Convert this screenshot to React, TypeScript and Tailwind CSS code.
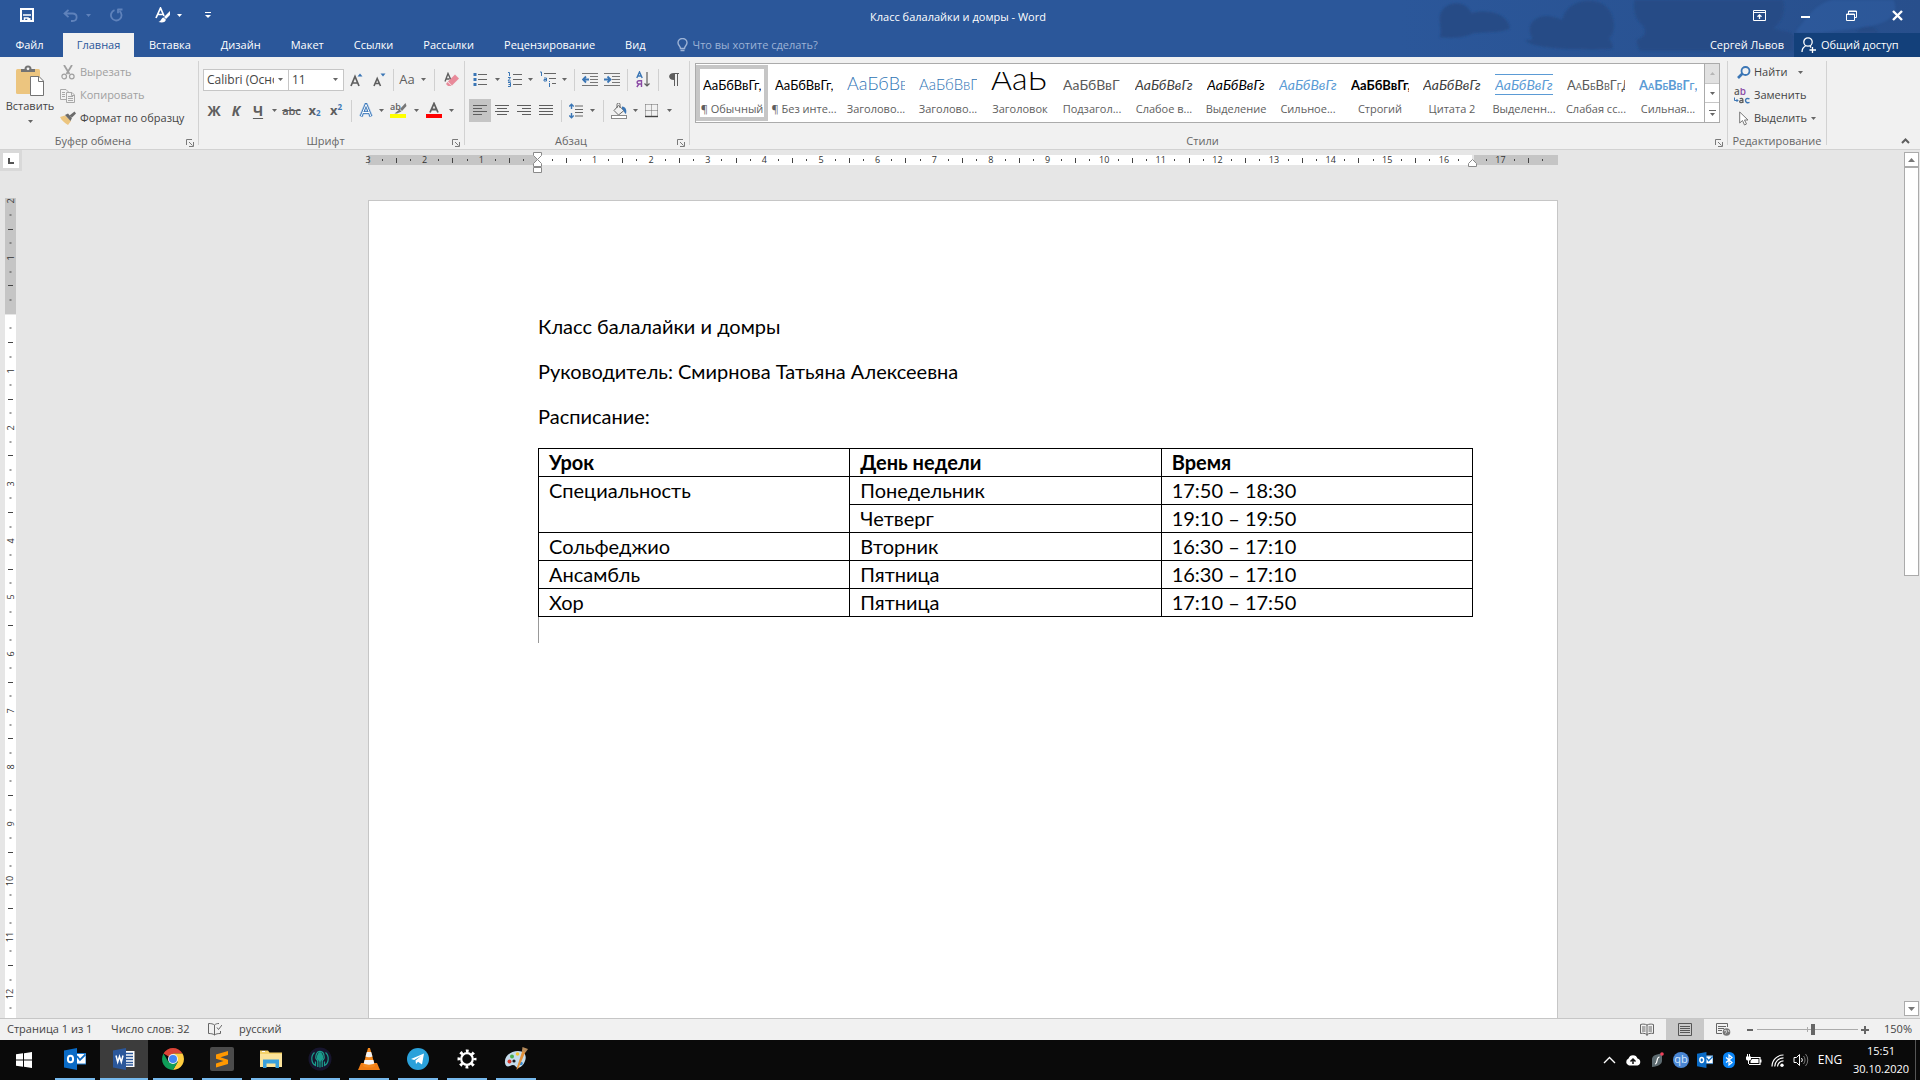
import React from "react";

type Kids = { children?: React.ReactNode };

/* ---------- shared pieces ---------- */

function Svg({ w, h, label, children }: Kids & { w: number; h: number; label?: string }) {
  return (
    <svg width={w} height={h} viewBox={`0 0 ${w} ${h}`} className="block shrink-0" aria-hidden={!label} aria-label={label} fill="none">
      {children}
    </svg>
  );
}

function Caret({ className = "text-[#666666]" }: { className?: string }) {
  return (
    <svg width="5" height="3" viewBox="0 0 5 3" className={`block shrink-0 ${className}`} aria-hidden="true">
      <path d="M0 0H5L2.5 3Z" fill="currentColor" />
    </svg>
  );
}

function Tool({ label, className, children }: Kids & { label: string; className: string }) {
  return (
    <button type="button" aria-label={label} className={`flex h-[23px] shrink-0 items-center justify-center text-[#5e5e5e] ${className}`}>
      {children}
    </button>
  );
}

function Divider({ className }: { className: string }) {
  return (
    <div className={`flex h-[22px] shrink-0 justify-center ${className}`}>
      <div className="w-px bg-[#d0d0d0]" />
    </div>
  );
}

function Launcher({ label }: { label: string }) {
  return (
    <button type="button" aria-label={label} className="mr-1 mt-1 shrink-0">
      <Svg w={8} h={8}>
        <path d="M.5 6V.5H6M3 3L6.5 6.5M7.5 3V7.5H3" stroke="#7a7a7a" />
      </Svg>
    </button>
  );
}

function Group({ title, launcher, className, children }: Kids & { title: string; launcher?: boolean; className: string }) {
  return (
    <section aria-label={title} className={`flex flex-col ${className}`}>
      <div className="h-[76px]">{children}</div>
      <div className="flex h-4 items-center">
        <div className="flex-1 text-center leading-4 text-[#666666]">{title}</div>
        {launcher && <Launcher label={`${title}: параметры`} />}
      </div>
    </section>
  );
}

function GroupLine() {
  return <div className="my-1 w-px shrink-0 bg-[#d2d2d2]" />;
}

/* ---------- title bar and tabs ---------- */

function Backdrop() {
  return (
    <svg className="absolute right-0 top-0 h-[57px] w-[520px]" viewBox="0 0 1560 171" aria-hidden="true">
      <defs>
        <linearGradient id="fade" x1="0" x2="1">
          <stop offset="0" stopColor="#2b579a" />
          <stop offset="1" stopColor="#284f8c" />
        </linearGradient>
        <filter id="soft">
          <feGaussianBlur stdDeviation="3" />
        </filter>
      </defs>
      <rect width="1560" height="171" fill="url(#fade)" />
      <g fill="#254c86" filter="url(#soft)">
        <path d="M118 112C130 98 112 60 122 40C136 4 196-4 214 40C250 28 320 34 330 84C320 98 250 96 220 100C180 118 150 112 118 112Z" />
        <path d="M375 120C400 120 400 118 392 104C376 60 430 30 486 60C500 6 560-8 604 10C650 34 650 100 626 116C640 128 640 140 636 146C590 150 400 152 375 120Z" />
        <path d="M704 0H1150C1160 40 1140 70 1120 84C1160 100 1190 90 1180 120V152H720C716 140 706 128 712 118C738 110 740 92 728 76C700 50 700 20 704 0Z" />
        <path d="M1370 100C1380 70 1420 70 1436 100Z" />
      </g>
      <g fill="#3162a8" opacity=".45" filter="url(#soft)">
        <path d="M1190 90C1220 60 1240 10 1300 0H1480C1500 40 1470 70 1400 80C1330 90 1260 100 1190 100Z" />
      </g>
    </svg>
  );
}

function TitleBar() {
  return (
    <div className="relative flex h-[33px] items-start text-white">
      <div className="flex h-[30px] flex-1 items-center">
        <button type="button" aria-label="Сохранить" className="ml-5">
          <Svg w={14} h={14}>
            <path d="M1 1H13V13H1Z" stroke="#fff" strokeWidth="2" />
            <path d="M3 7H11M4.500 10H8V13H4.500Z" stroke="#fff" strokeWidth="1.500" />
            <path d="M8 10h2.500v3H8z" fill="#fff" />
          </Svg>
        </button>
        <button type="button" aria-label="Отменить" className="ml-[29px] flex items-center gap-2 text-[#5f82bb]">
          <Svg w={15} h={13}>
            <path d="M5.500 .8L1.500 4.500L5.500 8.200M1.800 4.500H9.500C15 4.500 15 12 9.500 12H8" stroke="currentColor" strokeWidth="1.800" />
          </Svg>
          <Caret className="text-[#5f82bb]" />
        </button>
        <button type="button" aria-label="Повторить" className="ml-[19px] text-[#5f82bb]">
          <Svg w={13} h={14}>
            <path d="M4.500 2.200A5.300 5.300 0 1 0 9.500 3M8 1V5.200M7.500 1.500H12.500" stroke="currentColor" strokeWidth="1.800" />
          </Svg>
        </button>
        <button type="button" aria-label="Стиль текста" className="ml-8 flex items-center gap-[6px]">
          <Svg w={16} h={16}>
            <path d="M1 11L5.500 1L9 9M2.700 7.500H7.500" stroke="#fff" strokeWidth="1.700" />
            <path d="M15 4L15 8L11 12L9 10Z" fill="#fff" />
            <path d="M8.500 10.500C6 11 6.500 14 3.500 15C7 16 11 15.500 10.800 12.500Z" fill="#fff" />
          </Svg>
          <Caret className="text-white" />
        </button>
        <button type="button" aria-label="Настройка панели быстрого доступа" className="ml-[23px]">
          <Svg w={6} h={6}>
            <path d="M0 .5H6" stroke="#fff" />
            <path d="M0 3H6L3 6Z" fill="#fff" />
          </Svg>
        </button>
      </div>
      <h1 className="h-[33px] shrink-0 pl-3 text-[11px] leading-[33px]">Класс балалайки и домры - Word</h1>
      <div className="flex h-[30px] flex-1 items-center justify-end gap-[33px] pr-4">
        <button type="button" aria-label="Параметры отображения ленты">
          <Svg w={13} h={11}>
            <path d="M.5 .5H12.500V10.500H.5ZM.5 2.500H12.500" stroke="#fff" />
            <path d="M6.500 9V5M4.500 6.800L6.500 4.800L8.500 6.800" stroke="#fff" strokeWidth="1.300" />
          </Svg>
        </button>
        <button type="button" aria-label="Свернуть">
          <Svg w={13} h={11}>
            <path d="M2 7H11" stroke="#fff" strokeWidth="2" />
          </Svg>
        </button>
        <button type="button" aria-label="Окно">
          <Svg w={13} h={11}>
            <path d="M1.500 4H9.500V10.500H1.500ZM3.500 4V1H11.500V7.500H9.500" stroke="#fff" />
            <path d="M1 4.500H10M3 1.500H12" stroke="#fff" />
          </Svg>
        </button>
        <button type="button" aria-label="Закрыть">
          <Svg w={13} h={11}>
            <path d="M2 1L11 10M11 1L2 10" stroke="#fff" strokeWidth="2.400" />
          </Svg>
        </button>
      </div>
    </div>
  );
}

const tabs = ["Вставка", "Дизайн", "Макет", "Ссылки", "Рассылки", "Рецензирование", "Вид"];

function Tabs() {
  return (
    <nav className="relative flex h-6 items-stretch text-white">
      <button type="button" className="w-[63px] pr-1">Файл</button>
      <button type="button" className="w-[71px] bg-[#f1f1f1] text-[#2b579a]">Главная</button>
      {tabs.map((t) => (
        <button key={t} type="button" className="shrink-0 px-[15px]">{t}</button>
      ))}
      <label className="ml-4 flex flex-1 items-center gap-[5px]">
        <Svg w={11} h={14} label="Помощник">
          <path d="M3.500 10.500C3.500 8 1 7.500 1 4.800A4.500 4.300 0 0 1 10 4.800C10 7.500 7.500 8 7.500 10.500ZM3.500 12.500H7.500" stroke="#9db3d6" strokeWidth="1.400" />
        </Svg>
        <input type="text" placeholder="Что вы хотите сделать?" className="w-[160px] bg-transparent outline-none placeholder:text-[#9db3d6]" />
      </label>
      <button type="button" className="shrink-0 pr-[10px]">Сергей Львов</button>
      <button type="button" className="flex w-[126px] shrink-0 items-center gap-[5px] bg-[#13407a] pl-[7px]">
        <Svg w={15} h={16}>
          <circle cx="7" cy="5" r="4.200" stroke="#fff" strokeWidth="1.300" />
          <path d="M1 15C1 11.500 2.500 10 4.500 9M9 9.200L10 10.500M11.500 10V16M8.500 13H15" stroke="#fff" strokeWidth="1.300" />
        </Svg>
        Общий доступ
      </button>
    </nav>
  );
}

/* ---------- ribbon ---------- */

function Clipboard() {
  return (
    <Group title="Буфер обмена" launcher className="w-[198px] shrink-0">
      <div className="flex">
        <button type="button" className="flex w-[60px] flex-col items-center pt-2 text-[#444444]">
          <Svg w={28} h={31}>
            <rect x="0" y="4" width="24" height="25" rx="1.500" fill="#ecc57f" />
            <path d="M5 7V4H8.500A3.500 3.500 0 0 1 15.500 4H19V7Z" fill="#737373" />
            <circle cx="12" cy="3.800" r="1.400" fill="#f1f1f1" />
            <path d="M14.500 11.500H23L27.500 16V30.500H14.500Z" fill="#fff" stroke="#737373" />
            <path d="M22.500 11.500V16.500H27.500" stroke="#737373" />
          </Svg>
          <span className="mt-[2px] leading-4">Вставить</span>
          <span className="mt-[6px]"><Caret /></span>
        </button>
        <div className="flex flex-1 flex-col pt-1 text-[#a0a0a0]">
          <button type="button" className="flex h-[23px] items-center gap-1">
            <span className="flex w-4 justify-center">
              <Svg w={14} h={15}>
                <path d="M3 0L8.500 9M11 0L5.500 9" stroke="#a0a0a0" strokeWidth="1.800" />
                <circle cx="3.200" cy="11.500" r="2.300" stroke="#a0a0a0" strokeWidth="1.200" />
                <circle cx="10.800" cy="11.500" r="2.300" stroke="#a0a0a0" strokeWidth="1.200" />
              </Svg>
            </span>
            Вырезать
          </button>
          <button type="button" className="flex h-[23px] items-center gap-1">
            <Svg w={16} h={14}>
              <path d="M.5 .5H6L8.500 3V10.500H.5ZM2 3.500H5M2 5.500H5M2 7.500H5" stroke="#a8a8a8" />
              <path d="M6.500 3.500H12L14.500 6V13.500H6.500Z" fill="#f1f1f1" stroke="#a8a8a8" />
              <path d="M8 7.500H13M8 9.500H13M8 11.500H13M11.500 3.500V6.500H14.500" stroke="#a8a8a8" />
            </Svg>
            Копировать
          </button>
          <button type="button" className="flex h-[23px] items-center gap-1 text-[#444444]">
            <Svg w={16} h={15}>
              <path d="M0 6L5 4.500L11 10L8 14C5 12 2 10 0 6Z" fill="#ecc57f" />
              <path d="M5 4L8 2.500L12 7L10.500 10Z" fill="#6a6a6a" />
              <path d="M9.500 4.500L14.500 .5L16 2.500L12 6.500Z" fill="#6a6a6a" />
            </Svg>
            Формат по образцу
          </button>
        </div>
      </div>
    </Group>
  );
}

function Combo({ label, value, className }: { label: string; value: string; className: string }) {
  return (
    <div className={`flex h-[22px] shrink-0 items-center border border-[#c6c6c6] bg-white pr-[5px] ${className}`}>
      <input type="text" aria-label={label} defaultValue={value} className="mr-1 w-0 flex-1 bg-transparent pl-[3px] text-xs text-[#444444] outline-none" />
      <Caret />
    </div>
  );
}

function FontGroup() {
  return (
    <Group title="Шрифт" launcher className="w-[265px] shrink-0">
      <div className="flex flex-col gap-2 pl-1 pt-[11px]">
        <div className="flex items-center">
          <Combo label="Шрифт" value="Calibri (Основной текст)" className="w-[86px]" />
          <Combo label="Размер шрифта" value="11" className="-ml-px w-[56px]" />
          <Tool label="Увеличить размер" className="w-6">
            <Svg w={13} h={14}>
              <path d="M1 13L5 3.500L9 13M2.500 10H7.500" stroke="#5e5e5e" strokeWidth="1.700" />
              <path d="M7.500 3.500H12.500L10 .5Z" fill="#3b76b5" />
            </Svg>
          </Tool>
          <Tool label="Уменьшить размер" className="w-[22px]">
            <Svg w={13} h={14}>
              <path d="M1 13L4.200 5.500L7.500 13M2.200 10.500H6.300" stroke="#5e5e5e" strokeWidth="1.600" />
              <path d="M7.500 .5H12.500L10 3.500Z" fill="#3b76b5" />
            </Svg>
          </Tool>
          <Divider className="w-[6px]" />
          <Tool label="Регистр" className="w-[22px] text-[13px] font-medium">Aa</Tool>
          <Tool label="Варианты регистра" className="w-[10px]"><Caret /></Tool>
          <Divider className="w-3" />
          <Tool label="Очистить формат" className="w-[22px]">
            <Svg w={15} h={15}>
              <path d="M1 9.500L4 1.500L7 8M2 7H5.500" stroke="#5e5e5e" strokeWidth="1.400" />
              <path d="M11 2.500L15 6.500L8 13.500L4 9.500Z" fill="#e88a9a" />
              <path d="M3.500 10L7.500 14H4L2 12Z" fill="#e88a9a" />
            </Svg>
          </Tool>
        </div>
        <div className="flex items-center text-sm">
          <Tool label="Полужирный" className="w-[22px] font-bold">Ж</Tool>
          <Tool label="Курсив" className="w-[22px] font-bold italic">К</Tool>
          <Tool label="Подчеркнутый" className="w-[22px] font-bold underline underline-offset-2">Ч</Tool>
          <Tool label="Варианты подчеркивания" className="w-[10px]"><Caret /></Tool>
          <Tool label="Зачеркнутый" className="w-[25px] text-[11px] font-semibold line-through">abc</Tool>
          <Tool label="Подстрочный" className="w-[21px] text-[13px] font-bold">x<sub className="text-[8px] text-[#3b76b5]">2</sub></Tool>
          <Tool label="Надстрочный" className="w-[22px] text-[13px] font-bold">x<sup className="text-[8px] text-[#3b76b5]">2</sup></Tool>
          <Divider className="w-[9px]" />
          <Tool label="Текстовые эффекты" className="w-5">
            <Svg w={14} h={15}>
              <path d="M2 13.500L7 1.500L12 13.500M4 9.500H10" stroke="#a9c8ea" strokeWidth="4" />
              <path d="M2 13.500L7 1.500L12 13.500M4 9.500H10" stroke="#3b76b5" strokeWidth="2.600" />
              <path d="M2 13.500L7 1.500L12 13.500M4 9.500H10" stroke="#fff" strokeWidth="1" />
            </Svg>
          </Tool>
          <Tool label="Варианты эффектов" className="w-[10px]"><Caret /></Tool>
          <Tool label="Цвет выделения" className="w-[25px]">
            <Svg w={17} h={17}>
              <text x="0" y="8" fontFamily="Open Sans, sans-serif" fontSize="9" fontWeight="600" fill="#5e5e5e">ab</text>
              <path d="M15.500 1L10 7L12 9L16.500 4Z" fill="#777" />
              <path d="M9.500 7.500L11.500 9.500L7 11.500H4.500Z" fill="#777" />
              <rect x="0" y="12" width="16" height="4" fill="#ffff00" />
            </Svg>
          </Tool>
          <Tool label="Варианты выделения" className="w-[10px]"><Caret /></Tool>
          <Tool label="Цвет текста" className="w-[25px]">
            <Svg w={16} h={17}>
              <path d="M4 10.500L8 1.500L12 10.500M5.500 7.500H10.500" stroke="#5e5e5e" strokeWidth="1.800" />
              <rect x="0" y="12" width="16" height="4" fill="#ff0000" />
            </Svg>
          </Tool>
          <Tool label="Варианты цвета" className="w-[10px]"><Caret /></Tool>
        </div>
      </div>
    </Group>
  );
}

function Lines({ rows }: { rows: [number, number][] }) {
  return (
    <Svg w={14} h={12}>
      {rows.map(([a, b], i) => (
        <path key={i} d={`M${a} ${i * 3 + 0.5}H${b}`} stroke="#5e5e5e" />
      ))}
    </Svg>
  );
}

function Indent({ right }: { right?: boolean }) {
  return (
    <Svg w={16} h={13}>
      <path d="M0 .5H16M8 3.500H16M8 6.500H16M8 9.500H16M0 12.500H16" stroke="#777" />
      <path d={right ? "M0 6.500H6M3.500 3.500L6.500 6.500L3.500 9.500" : "M7 6.500H1M4 3.500L1 6.500L4 9.500"} stroke="#3b76b5" strokeWidth="1.800" />
    </Svg>
  );
}

function ParagraphGroup() {
  return (
    <Group title="Абзац" launcher className="w-[224px] shrink-0">
      <div className="flex flex-col gap-2 pl-1 pt-[11px]">
        <div className="flex items-center">
          <Tool label="Маркеры" className="w-[22px]">
            <Svg w={14} h={15}>
              <path d="M5 2.500H14M5 7.500H14M5 12.500H14" stroke="#666" />
              <path d="M.5 1H3.500V4H.5ZM.5 6H3.500V9H.5ZM.5 11H3.500V14H.5Z" fill="#3b76b5" />
            </Svg>
          </Tool>
          <Tool label="Варианты маркеров" className="w-3"><Caret /></Tool>
          <Tool label="Нумерация" className="w-[22px]">
            <Svg w={15} h={17}>
              <path d="M6 3.500H15M6 8.500H15M6 13.500H15" stroke="#666" />
              <path d="M1 1.500H2.500V5M1 6.500H3.500L1 10H4M1 11.500H3.500V15.500H1M1.500 13.500H3.500" stroke="#3b76b5" />
            </Svg>
          </Tool>
          <Tool label="Варианты нумерации" className="w-[10px]"><Caret /></Tool>
          <Tool label="Многоуровневый список" className="w-6">
            <Svg w={17} h={17}>
              <path d="M5 2.500H17M10 7.500H17M13 12.500H17" stroke="#666" />
              <path d="M1 1H2.500V5M5 7H7.500V10H5V8.500H7.500M10.500 12V16M10.500 10V11" stroke="#3b76b5" />
            </Svg>
          </Tool>
          <Tool label="Варианты списка" className="w-[10px]"><Caret /></Tool>
          <Divider className="w-[10px]" />
          <Tool label="Уменьшить отступ" className="w-[22px]"><Indent /></Tool>
          <Tool label="Увеличить отступ" className="w-[22px]"><Indent right /></Tool>
          <Divider className="w-2" />
          <Tool label="Сортировка" className="w-6">
            <Svg w={14} h={17}>
              <path d="M.8 7L3.500 1L6.200 7M1.800 5H5.200" stroke="#3b76b5" strokeWidth="1.400" />
              <path d="M5.500 16V9.700H3C.5 9.700.5 13 3 13H5.500M3 13L.8 16" stroke="#8b4aa5" strokeWidth="1.400" />
              <path d="M11 1V15M8.500 12.500L11 15L13.500 12.500" stroke="#5e5e5e" strokeWidth="1.200" />
            </Svg>
          </Tool>
          <Divider className="w-[6px]" />
          <Tool label="Отобразить все знаки" className="w-[26px]">
            <Svg w={10} h={13}>
              <path d="M5 0H10V1H9V13H8V1H6V13H5V7C-1.500 7-1.500 0 5 0Z" fill="#5e5e5e" />
            </Svg>
          </Tool>
        </div>
        <div className="flex items-center">
          <Tool label="По левому краю" className="w-[22px] bg-[#c5c5c5]"><Lines rows={[[0, 14], [0, 9], [0, 14], [0, 9]]} /></Tool>
          <Tool label="По центру" className="w-[22px]"><Lines rows={[[0, 14], [2, 12], [0, 14], [2, 12]]} /></Tool>
          <Tool label="По правому краю" className="w-[22px]"><Lines rows={[[0, 14], [5, 14], [0, 14], [5, 14]]} /></Tool>
          <Tool label="По ширине" className="w-[22px]"><Lines rows={[[0, 14], [0, 14], [0, 14], [0, 14]]} /></Tool>
          <Divider className="w-2" />
          <Tool label="Интервал" className="w-[22px]">
            <Svg w={14} h={16}>
              <path d="M6 3H14M6 6.500H14M6 9.500H14M6 13H14" stroke="#666" />
              <path d="M2.500 1V6M2.500 15V10M.3 3.500L2.500 1.200L4.700 3.500M.3 12.500L2.500 14.800L4.700 12.500" stroke="#3b76b5" strokeWidth="1.400" />
            </Svg>
          </Tool>
          <Tool label="Варианты интервала" className="w-[10px]"><Caret /></Tool>
          <Divider className="w-3" />
          <Tool label="Заливка" className="w-5">
            <Svg w={17} h={16}>
              <path d="M7.500 2.500L13 7.500L7.500 12L3 7.500ZM6 5V1.500A1.500 1.500 0 0 1 9 1.500V5" stroke="#6a6a6a" />
              <path d="M11 3.500C15 4 16 7 15 11C13 10 13 7 11 6Z" fill="#3b76b5" />
              <rect x=".5" y="12.500" width="15" height="3" fill="#fff" stroke="#8a8a8a" />
            </Svg>
          </Tool>
          <Tool label="Варианты заливки" className="w-3"><Caret /></Tool>
          <Tool label="Границы" className="w-[22px]">
            <Svg w={14} h={14}>
              <path d="M.5 .5H13M.5 6.500H13M.5 .5V12M6.500 .5V12M12.500 .5V12" stroke="#6a6a6a" strokeDasharray="1 1" />
              <path d="M0 12.500H13" stroke="#444" strokeWidth="1.400" />
            </Svg>
          </Tool>
          <Tool label="Варианты границ" className="w-3"><Caret /></Tool>
        </div>
      </div>
    </Group>
  );
}

const styles = [
  { name: "¶ Обычный", sample: "АаБбВвГг,", look: "text-[13px] text-black" },
  { name: "¶ Без инте...", sample: "АаБбВвГг,", look: "text-[13px] text-black" },
  { name: "Заголово...", sample: "АаБбВв", look: "text-lg font-light text-[#2e74b5]" },
  { name: "Заголово...", sample: "АаБбВвГ", look: "text-[15px] font-light text-[#2e74b5]" },
  { name: "Заголовок", sample: "АаБ", look: "text-[32px] font-light text-black" },
  { name: "Подзагол...", sample: "АаБбВвГ", look: "text-sm text-[#5a5a5a]" },
  { name: "Слабое в...", sample: "АаБбВвГг", look: "text-sm italic text-[#404040]" },
  { name: "Выделение", sample: "АаБбВвГг", look: "text-sm italic text-black" },
  { name: "Сильное...", sample: "АаБбВвГг", look: "text-sm italic text-[#5b9bd5]" },
  { name: "Строгий", sample: "АаБбВвГг,", look: "text-[13px] font-bold text-black" },
  { name: "Цитата 2", sample: "АаБбВвГг", look: "text-sm italic text-[#404040]" },
  { name: "Выделенн...", sample: "АаБбВвГг", look: "border-y border-[#5b9bd5] py-px text-sm italic text-[#5b9bd5]" },
  { name: "Слабая сс...", sample: "АаБбВвГгД", look: "text-[13px] [font-variant-caps:small-caps] text-[#5a5a5a]" },
  { name: "Сильная...", sample: "АаБбВвГг,", look: "text-[13px] font-bold [font-variant-caps:small-caps] text-[#5b9bd5]" },
];

function StylesGroup() {
  return (
    <Group title="Стили" launcher className="min-w-0 flex-1">
      <div className="ml-[5px] mr-[7px] flex pt-[6px]">
        <div className="grid h-[60px] min-w-0 flex-1 grid-cols-14 border border-[#ababab] bg-white">
          {styles.map((s, i) => (
            <button
              key={i}
              type="button"
              className={`my-px flex min-w-0 flex-col items-center border-4 pt-[3px] ${i === 0 ? "border-[#c6c6c6]" : "border-transparent"}`}
            >
              <span className="block h-[26px] w-[58px] overflow-hidden whitespace-nowrap text-left font-[Lato,'Open_Sans',sans-serif] text-[13px] leading-[26px]">
                <span className={`leading-[0] ${s.look}`}>{s.sample}</span>
              </span>
              <span className="mt-[3px] whitespace-nowrap leading-[15px] text-[#5e5e5e]">{s.name}</span>
            </button>
          ))}
        </div>
        <div className="flex h-[60px] w-[15px] flex-col border-y border-r border-[#ababab] bg-white">
          <button type="button" aria-label="Вверх" className="flex flex-1 items-center justify-center border-b border-[#c6c6c6] bg-[#e1e1e1]">
            <span className="rotate-180"><Caret className="text-[#b5b5b5]" /></span>
          </button>
          <button type="button" aria-label="Вниз" className="flex flex-1 items-center justify-center border-b border-[#c6c6c6]">
            <Caret />
          </button>
          <button type="button" aria-label="Все стили" className="flex flex-1 flex-col items-center justify-center gap-[2px]">
            <span className="h-px w-[7px] bg-[#666666]" />
            <Caret />
          </button>
        </div>
      </div>
    </Group>
  );
}

function EditGroup() {
  return (
    <Group title="Редактирование" className="w-[98px] shrink-0">
      <div className="flex flex-col pl-[6px] pt-1 text-[#444444]">
        <button type="button" className="flex h-[23px] items-center">
          <span className="flex w-5 justify-center">
            <Svg w={14} h={13}>
              <circle cx="8.500" cy="5" r="4" stroke="#3b76b5" strokeWidth="1.800" />
              <path d="M5.500 7.500L1 12" stroke="#3b76b5" strokeWidth="2.600" />
            </Svg>
          </span>
          <span className="w-[44px] text-left">Найти</span>
          <Caret />
        </button>
        <button type="button" className="flex h-[23px] items-center">
          <span className="flex w-5">
            <Svg w={17} h={16}>
              <text y="7" fontFamily="Open Sans, sans-serif" fontSize="10" fontWeight="600">
                <tspan fill="#5e5e5e">a</tspan>
                <tspan fill="#8b4aa5">b</tspan>
              </text>
              <path d="M5.700 10.800C7 10 8.900 10 8.900 12V15M8.900 12.500C6 12.300 5.500 13 5.700 13.800C6 15 8.500 14.800 8.900 13.500" stroke="#5e5e5e" strokeWidth="1.300" />
              <path d="M15.500 10.900C13 9.800 11.500 11 11.500 12.600C11.500 14.500 13.500 15.200 15.500 14.300" stroke="#3b76b5" strokeWidth="1.400" />
              <path d="M.5 9.500V12.500H4M2.500 11L4 12.500L2.500 14" stroke="#3b76b5" />
            </Svg>
          </span>
          Заменить
        </button>
        <button type="button" className="flex h-[23px] items-center">
          <span className="flex w-5 pl-[5px]">
            <Svg w={10} h={15}>
              <path d="M.7 1V12L3.500 9.500L5.500 14L7.500 13L5.500 9H9Z" fill="#fff" stroke="#777" />
            </Svg>
          </span>
          <span className="mr-1">Выделить</span>
          <Caret />
        </button>
      </div>
    </Group>
  );
}

function Ribbon() {
  return (
    <div className="flex h-[93px] shrink-0 border-b border-[#d2d2d2] bg-[#f1f1f1]">
      <Clipboard />
      <GroupLine />
      <FontGroup />
      <GroupLine />
      <ParagraphGroup />
      <GroupLine />
      <StylesGroup />
      <GroupLine />
      <EditGroup />
      <GroupLine />
      <div className="flex w-[93px] shrink-0 items-end justify-end pb-[5px] pr-[10px]">
        <button type="button" aria-label="Свернуть ленту">
          <Svg w={9} h={6}>
            <path d="M1 5L4.500 1.500L8 5" stroke="#5e5e5e" strokeWidth="2" />
          </Svg>
        </button>
      </div>
    </div>
  );
}

/* ---------- rulers ---------- */

function tickKind(i: number, origin: number) {
  const d = Math.abs(i - origin);
  if (d === 0) return "none";
  if (d % 4 === 0) return String(d / 4);
  return d % 2 === 0 ? "bar" : "dot";
}

function Tick({ kind }: { kind: string }) {
  if (kind === "none") return null;
  if (kind === "bar") return <span className="h-[5px] w-px shrink-0 bg-[#444444]" />;
  if (kind === "dot") return <span className="h-[2px] w-px shrink-0 bg-[#444444]" />;
  return <span className="shrink-0 text-[9px] leading-3 text-[#333333]">{kind}</span>;
}

function HorizontalRuler() {
  const ticks = Array.from({ length: 85 }, (_, i) => (i === 78 || i > 83 ? "none" : tickKind(i, 12)));
  return (
    <div className="relative flex h-[10px] w-[1190px] shrink-0 items-center justify-between">
      <div className="absolute inset-0 flex">
        <div className="w-[170px] bg-[#c5c5c5]" />
        <div className="flex-1 bg-white" />
        <div className="w-[86px] border-l-2 border-[#e6e6e6] bg-[#c5c5c5]" />
      </div>
      {ticks.map((k, i) => (
        <div key={i} className="relative flex h-3 w-0 items-center justify-center">
          <Tick kind={k} />
          {i === 12 && (
            <div className="absolute -top-[2px]">
              <Svg w={9} h={21}>
                <path d="M.5 .5H8.500V3.500L4.500 7.500L.5 3.500ZM.5 11.500L4.500 7.500L8.500 11.500V14.500H.5ZM.5 15.500H8.500V20.500H.5Z" fill="#fff" stroke="#8a8a8a" />
              </Svg>
            </div>
          )}
          {i === 78 && (
            <div className="absolute top-[5px]">
              <Svg w={9} h={8}>
                <path d="M.5 7.500V4.500L4.500 .5L8.500 4.500V7.500Z" fill="#fff" stroke="#8a8a8a" />
              </Svg>
            </div>
          )}
        </div>
      ))}
    </div>
  );
}

function VerticalRuler() {
  const ticks = Array.from({ length: 121 }, (_, i) => tickKind(i, 8));
  return (
    <div className="min-h-0 flex-1 overflow-hidden pl-[5px] pt-[27px]">
      <div className="relative flex h-[1703px] w-[11px] flex-col items-center justify-between pt-[3px]">
        <div className="absolute inset-0 flex flex-col">
          <div className="h-[117px] border-b border-[#e6e6e6] bg-[#c5c5c5]" />
          <div className="flex-1 bg-white" />
        </div>
        {ticks.map((k, i) => (
          <div key={i} className="relative flex h-0 items-center justify-center">
            <div className="-rotate-90"><div className="flex items-center"><Tick kind={k} /></div></div>
          </div>
        ))}
      </div>
    </div>
  );
}

/* ---------- document ---------- */

function Cell({ children, rowSpan }: Kids & { rowSpan?: number }) {
  return <td rowSpan={rowSpan} className="border border-black py-0 pl-[10px] align-top">{children}</td>;
}

const rows: { lesson?: string; span?: number; day: string; time: string }[] = [
  { lesson: "Специальность", span: 2, day: "Понедельник", time: "17:50 – 18:30" },
  { day: "Четверг", time: "19:10 – 19:50" },
  { lesson: "Сольфеджио", day: "Вторник", time: "16:30 – 17:10" },
  { lesson: "Ансамбль", day: "Пятница", time: "16:30 – 17:10" },
  { lesson: "Хор", day: "Пятница", time: "17:10 – 17:50" },
];

function Page() {
  return (
    <article className="w-[1190px] flex-1 border border-b-0 border-[#c6c6c6] bg-white pl-[169px] pr-[84px] pt-28 font-[Lato,'Open_Sans',sans-serif] text-xl leading-[27px] text-black">
      <p className="mb-[18px]">Класс балалайки и домры</p>
      <p className="mb-[18px]">Руководитель: Смирнова Татьяна Алексеевна</p>
      <p className="mb-[18px]">Расписание:</p>
      <table className="w-full table-fixed border-collapse text-left">
        <thead>
          <tr>
            {["Урок", "День недели", "Время"].map((h) => (
              <th key={h} scope="col" className="border border-black py-0 pl-[10px] font-bold">{h}</th>
            ))}
          </tr>
        </thead>
        <tbody>
          {rows.map((r, i) => (
            <tr key={i}>
              {r.lesson && <Cell rowSpan={r.span}>{r.lesson}</Cell>}
              <Cell>{r.day}</Cell>
              <Cell>{r.time}</Cell>
            </tr>
          ))}
        </tbody>
      </table>
      <div className="h-[26px] w-px bg-[#999999]" />
    </article>
  );
}

function ScrollBar() {
  return (
    <div className="flex w-4 shrink-0 flex-col pb-[2px] pr-px pt-[2px]">
      <button type="button" aria-label="Прокрутить вверх" className="flex h-[15px] items-center justify-center border border-[#ababab] bg-white">
        <span className="rotate-180"><Svg w={7} h={4}><path d="M0 0H7L3.500 4Z" fill="#777" /></Svg></span>
      </button>
      <div className="flex-1">
        <div className="h-[485px] max-h-[49%] border border-[#ababab] bg-white" />
      </div>
      <button type="button" aria-label="Прокрутить вниз" className="flex h-[15px] items-center justify-center border border-[#ababab] bg-white">
        <Svg w={7} h={4}><path d="M0 0H7L3.500 4Z" fill="#777" /></Svg>
      </button>
    </div>
  );
}

function Workspace() {
  return (
    <main className="flex min-h-0 flex-1 bg-[#e6e6e6]">
      <div className="flex w-[22px] shrink-0 flex-col">
        <button type="button" aria-label="Тип табуляции" className="flex h-[21px] w-[22px] items-center justify-center border-[3px] border-[#d9d9d9] bg-white">
          <Svg w={6} h={6}><path d="M1 0V5H6" stroke="#555" strokeWidth="2" /></Svg>
        </button>
        <VerticalRuler />
      </div>
      <div className="flex min-w-0 flex-1 flex-col items-center overflow-hidden pt-[5px]">
        <HorizontalRuler />
        <div className="mt-[35px] flex min-h-0 flex-1"><Page /></div>
      </div>
      <ScrollBar />
    </main>
  );
}

/* ---------- status bar ---------- */

function StatusBar() {
  return (
    <footer className="flex h-[22px] shrink-0 items-stretch border-t border-[#c6c6c6] bg-[#f1f1f1] pl-[7px] text-[#444444]">
      <div className="flex flex-1 items-center">
        <span className="w-[104px]">Страница 1 из 1</span>
        <span className="w-[97px]">Число слов: 32</span>
        <button type="button" aria-label="Проверка правописания" className="w-[31px]">
          <Svg w={14} h={13}>
            <path d="M6.500 12V2C5 .8 3 .5 .5 .5V10.500C3 10.500 5 10.800 6.500 12C8 10.800 10 10.500 12.500 10.500V8M6.500 2C8 .8 9 .5 11 .5M9 4.500L10.500 6.500L14 2" stroke="#666" />
          </Svg>
        </button>
        <button type="button">русский</button>
      </div>
      <button type="button" aria-label="Режим чтения" className="flex w-[38px] items-center justify-center">
        <Svg w={14} h={13}>
          <path d="M7 2V13M.5 1.500C3 .8 5 1 7 2C9 1 11 .8 13.500 1.500V10.500C11 10 9 10.300 7 11.500C5 10.300 3 10 .5 10.500Z" stroke="#666" />
          <path d="M2 4H5.500M2 6H5.500M2 8H5.500M8.500 4H12M8.500 6H12M8.500 8H12" stroke="#666" />
        </Svg>
      </button>
      <button type="button" aria-label="Разметка страницы" className="flex w-[38px] items-center justify-center bg-[#c9c9c9]">
        <Svg w={14} h={13}>
          <path d="M.5 .5H13.500V12.500H.5ZM2 3.500H12M2 5.500H12M2 7.500H12M2 9.500H12" stroke="#555" />
        </Svg>
      </button>
      <button type="button" aria-label="Веб-документ" className="flex w-[38px] items-center justify-center">
        <Svg w={15} h={14}>
          <path d="M6 10.500H.5V.5H11.500V4M2 3.500H10M2 5.500H8M2 7.500H6" stroke="#666" />
          <circle cx="10.500" cy="9" r="3.800" fill="#777" />
          <path d="M8 8L10 7L10.500 9L9.500 10.500M12 7L13 9" stroke="#f1f1f1" strokeWidth=".8" />
        </Svg>
      </button>
      <div className="flex w-[131px] items-center justify-center gap-[3px]">
        <button type="button" aria-label="Уменьшить масштаб"><Svg w={8} h={8}><path d="M1 4H7" stroke="#666" strokeWidth="2" /></Svg></button>
        <div className="relative flex h-3 w-[101px] items-center">
          <div className="absolute inset-x-0 top-[5px] h-px bg-[#ababab]" />
          <div className="absolute left-[50px] h-[5px] w-px bg-[#ababab]" />
          <input
            type="range"
            aria-label="Масштаб"
            defaultValue={56}
            className="relative h-3 w-full appearance-none bg-transparent [&::-webkit-slider-thumb]:h-[11px] [&::-webkit-slider-thumb]:w-1 [&::-webkit-slider-thumb]:appearance-none [&::-webkit-slider-thumb]:bg-[#666666]"
          />
        </div>
        <button type="button" aria-label="Увеличить масштаб"><Svg w={8} h={8}><path d="M0 4H8M4 0V8" stroke="#666" strokeWidth="2" /></Svg></button>
      </div>
      <button type="button" className="w-[47px] pr-2 text-right">150%</button>
    </footer>
  );
}

/* ---------- taskbar ---------- */

function OutlookIcon({ size }: { size: number }) {
  return (
    <svg width={size} height={size} viewBox="0 0 22 22" aria-hidden="true" fill="none">
      <path d="M12 5H22V16H12Z" fill="#fff" />
      <path d="M12 5.500H22V16H12" stroke="#1b7bd0" />
      <path d="M13 8L16 12L21.500 6.500" stroke="#0d6cc4" strokeWidth="1.800" />
      <path d="M0 2.500L13 0V22L0 19.500Z" fill="#0a6bc6" />
      <ellipse cx="6.500" cy="11" rx="2.600" ry="3.300" stroke="#fff" strokeWidth="2" />
    </svg>
  );
}

const apps: { name: string; icon: React.ReactNode }[] = [
  { name: "Outlook", icon: <OutlookIcon size={22} /> },
  {
    name: "Word",
    icon: (
      <Svg w={22} h={22}>
        <path d="M12 3H21.500V19H12Z" fill="#fff" />
        <path d="M13 5.500H20M13 8.500H20M13 11.500H20M13 14.500H20M13 17H20" stroke="#2b579a" strokeWidth="1.300" />
        <path d="M0 2.500L13 0V22L0 19.500Z" fill="#2b579a" />
        <path d="M3 7.500L4.700 14L6.500 8.500L8.300 14L10 7.500" stroke="#fff" strokeWidth="1.500" />
      </Svg>
    ),
  },
  {
    name: "Chrome",
    icon: (
      <Svg w={22} h={22}>
        <path d="M11 11L1.500 5.500A11 11 0 0 1 20.500 5.500H11Z" fill="#db4437" />
        <path d="M20.500 5.500H11V11L15.800 13.800L11 22A11 11 0 0 0 20.500 5.500Z" fill="#ffcd40" />
        <path d="M1.500 5.500L6.300 13.800H15.800L11 22A11 11 0 0 1 1.500 5.500Z" fill="#0f9d58" />
        <circle cx="11" cy="11" r="5" fill="#f1f1f1" />
        <circle cx="11" cy="11" r="4" fill="#4285f4" />
      </Svg>
    ),
  },
  {
    name: "Sublime Text",
    icon: (
      <Svg w={24} h={24}>
        <rect width="24" height="24" rx="2" fill="#4b4b4b" />
        <path d="M18 4V8L10.500 10.300L18 12.700V17L6 20.500V16.500L13.500 14L6 11.700V7.500Z" fill="#ff9800" />
      </Svg>
    ),
  },
  {
    name: "Проводник",
    icon: (
      <Svg w={22} h={20}>
        <path d="M0 1.500H8L9.500 3.500H22V17H0Z" fill="#f5d26b" />
        <path d="M0 5H22V18H0Z" fill="#fbe39a" />
        <path d="M3 19V10.500H19V19H15.500V14.500H6.500V19Z" fill="#3aa0dc" />
        <path d="M2 2.500H5" stroke="#fff" />
      </Svg>
    ),
  },
  {
    name: "GitKraken",
    icon: (
      <Svg w={24} h={24}>
        <circle cx="12" cy="12" r="11.500" fill="#17152e" />
        <path d="M12 4.500C8.800 4.500 7.800 8 7.800 10.500C7.800 12.500 9.500 12.800 9.800 14V20M12 4.500C15.200 4.500 16.200 8 16.200 10.500C16.200 12.500 14.500 12.800 14.200 14V20" stroke="#1a9c8c" strokeWidth="1.300" />
        <path d="M12 5C9 6 8.500 10 9 12L12 15L15 12C15.500 10 15 6 12 5Z" fill="#1a9c8c" />
        <path d="M12 13V20.500M6.500 5.500C2.500 9 3 16 7.500 18.500V14.500M17.500 5.500C21.500 9 21 16 16.500 18.500V14.500" stroke="#1a9c8c" strokeWidth="1.200" />
      </Svg>
    ),
  },
  {
    name: "VLC",
    icon: (
      <Svg w={22} h={24}>
        <path d="M3 16H19L22 23H0Z" fill="#f07d14" />
        <path d="M10 1H12L17 19C14 21 8 21 5 19Z" fill="#f58a1f" />
        <path d="M8.800 5H13.200L14.500 9.500C12.500 10.500 9.500 10.500 7.500 9.500ZM6.600 13H15.400L16.300 16.500C13.500 18 8.500 18 5.700 16.500Z" fill="#f4f4f4" />
      </Svg>
    ),
  },
  {
    name: "Telegram",
    icon: (
      <Svg w={22} h={22}>
        <circle cx="11" cy="11" r="11" fill="#2aa1da" />
        <path d="M4 11L17 5.500L15 16.500L11 13.800L9 16L8.500 12.500L14 8L7.200 12Z" fill="#fff" />
      </Svg>
    ),
  },
  {
    name: "Параметры",
    icon: (
      <Svg w={20} h={20}>
        <circle cx="10" cy="10" r="5.800" stroke="#fff" strokeWidth="2.200" />
        <circle cx="10" cy="10" r="8" stroke="#fff" strokeWidth="3" strokeDasharray="2.800 3.483" strokeDashoffset="1.400" />
      </Svg>
    ),
  },
  {
    name: "Paint",
    icon: (
      <Svg w={24} h={24}>
        <path d="M1 16C0 9 7 4 14 4C21 4 23 9 21 14C19 20 14 22 12 20C11 18 9 17 6 19C3 20 1.500 19 1 16Z" fill="#c5dcec" />
        <circle cx="5.500" cy="14.500" r="2" fill="#d8392b" />
        <circle cx="8" cy="9.500" r="2" fill="#4caf50" />
        <circle cx="13.500" cy="7" r="1.800" fill="#f4c430" />
        <circle cx="10" cy="14" r="1.600" fill="#1a1a1a" />
        <circle cx="17" cy="16.500" r="1.800" fill="#3b8bd0" />
        <path d="M19 2L22 3.500L14.500 21L12.500 23L13 20Z" fill="#e2913a" />
        <path d="M18.500 0L24 2L21.500 5.500L18 4Z" fill="#b58a5a" />
      </Svg>
    ),
  },
];

const tray: { name: string; icon: React.ReactNode }[] = [
  { name: "Скрытые значки", icon: <Svg w={13} h={8}><path d="M1 7L6.500 1.500L12 7" stroke="#fff" strokeWidth="1.400" /></Svg> },
  {
    name: "Облако",
    icon: (
      <Svg w={16} h={12}>
        <path d="M4 11.500A3.700 3.700 0 0 1 3.500 4.500A4.700 4.700 0 0 1 12.500 4.500A3.600 3.600 0 0 1 12.500 11.500Z" fill="#fff" />
        <path d="M8 10V6M5.500 7.500L8 5L10.500 7.500" stroke="#111" strokeWidth="1.500" />
      </Svg>
    ),
  },
  {
    name: "Перо",
    icon: (
      <Svg w={13} h={16}>
        <path d="M1 15V7C1 4 5 2 11 1.500V9C11 12 7 14.500 1 15Z" fill="#5d6b70" />
        <path d="M4 12C7 12 5 5 8.500 5" stroke="#fff" strokeWidth="1.200" />
        <circle cx="11" cy="2" r="1.800" fill="#f0405a" />
      </Svg>
    ),
  },
  {
    name: "qBittorrent",
    icon: (
      <span className="flex h-4 w-4 items-center justify-center rounded-full bg-[#4a86d4] pb-[2px] text-[11px] leading-4 text-[#d4e6fb]">qb</span>
    ),
  },
  { name: "Почта", icon: <OutlookIcon size={16} /> },
  {
    name: "Bluetooth",
    icon: (
      <Svg w={12} h={16}>
        <rect width="12" height="16" rx="5.500" fill="#0a84f5" />
        <path d="M3 5.500L9 10.500L6 13V3L9 5.500L3 10.500" stroke="#fff" strokeWidth="1.200" />
      </Svg>
    ),
  },
  {
    name: "Батарея",
    icon: (
      <Svg w={17} h={13}>
        <path d="M5.500 3.500H15V10.500H5.500" stroke="#fff" strokeWidth="1.200" />
        <path d="M7 5H13.500V9H5.500V7ZM15 5.500H16.500V8.500H15Z" fill="#fff" />
        <path d="M1 2.500H6V5C6 7 1 7 1 5ZM2 0H3V2.500H2ZM4 0H5V2.500H4ZM3 6.500H4V11H6V10H3Z" fill="#fff" />
      </Svg>
    ),
  },
  {
    name: "Сеть",
    icon: (
      <Svg w={13} h={13}>
        <path d="M1 12.500A11.500 11.500 0 0 1 12.500 1M3.700 12.500A8.800 8.800 0 0 1 12.500 3.900M6.500 12.500A6 6 0 0 1 12.500 6.800" stroke="#fff" strokeWidth="1.200" />
        <circle cx="11" cy="11.200" r="1.700" fill="#fff" />
      </Svg>
    ),
  },
  {
    name: "Звук",
    icon: (
      <Svg w={17} h={14}>
        <path d="M1 4.500H3.500L6.500 1.500V12.500L3.500 9.500H1Z" stroke="#fff" />
        <path d="M8.500 5A3 3 0 0 1 8.500 9" stroke="#fff" />
        <path d="M10.500 3A6 6 0 0 1 10.500 11M12.500 1A9 9 0 0 1 12.500 13" stroke="#777" />
      </Svg>
    ),
  },
];

function TaskBar() {
  return (
    <footer className="flex h-10 shrink-0 bg-[#0a0a0a] text-xs text-white">
      <button type="button" aria-label="Пуск" className="flex w-[51px] items-center justify-center pr-[3px]">
        <Svg w={16} h={16}>
          <path d="M0 2.300L7 1.300V7.500H0ZM8 1.200L16 0V7.500H8ZM0 8.500H7V14.700L0 13.700ZM8 8.500H16V16L8 14.800Z" fill="#fff" />
        </Svg>
      </button>
      <div className="flex flex-1 gap-px">
        {apps.map((a) => (
          <button
            key={a.name}
            type="button"
            aria-label={a.name}
            className={`flex w-12 flex-col items-center ${a.name === "Word" ? "bg-[#3c3c3c]" : ""}`}
          >
            <span className="flex flex-1 items-center">{a.icon}</span>
            <span className={`h-[2px] bg-[#76b9ed] ${a.name === "Word" ? "w-full" : "w-10"}`} />
          </button>
        ))}
      </div>
      <div className="flex shrink-0 items-center">
        {tray.map((t) => (
          <button key={t.name} type="button" aria-label={t.name} className="flex h-10 w-6 items-center justify-center">{t.icon}</button>
        ))}
        <button type="button" className="w-[34px]">ENG</button>
        <time className="w-[68px] text-center text-[11px] leading-[18px]">15:51<br />30.10.2020</time>
        <div className="mr-1 h-10 w-px bg-[#555555]" />
      </div>
    </footer>
  );
}

export default function App() {
  return (
    <div className="flex h-screen flex-col overflow-hidden font-['Open_Sans','Noto_Sans',sans-serif] text-[11px]">
      <header className="relative shrink-0 bg-[#2b579a]">
        <Backdrop />
        <TitleBar />
        <Tabs />
      </header>
      <Ribbon />
      <Workspace />
      <StatusBar />
      <TaskBar />
    </div>
  );
}
